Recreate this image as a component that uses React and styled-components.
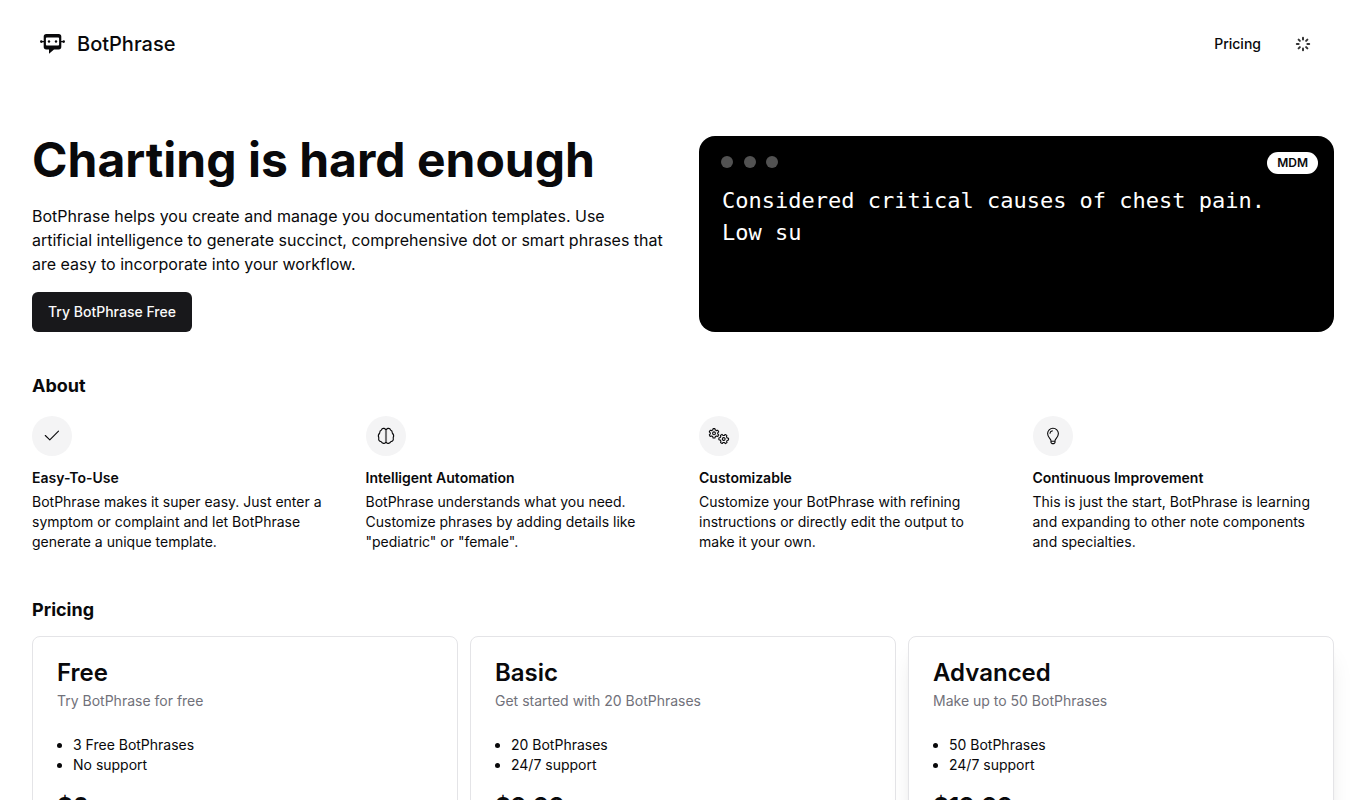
import React from 'react';
import styled, { createGlobalStyle, ThemeProvider } from 'styled-components';

const theme = {
  colors: {
    text: '#09090b',
    muted: '#71717a',
    border: '#e4e4e7',
    primary: '#18181b',
    onPrimary: '#fafafa',
    chip: '#f4f4f5',
    white: '#ffffff',
    black: '#000000',
  },
};

const GlobalStyle = createGlobalStyle`
  *,
  *::before,
  *::after {
    box-sizing: border-box;
  }

  body {
    margin: 0;
    background-color: #ffffff;
    color: #09090b;
    font-family: Inter, 'Liberation Sans', sans-serif;
    font-size: 16px;
    line-height: 24px;
  }

  h1, h2, h3, p, ul {
    margin: 0;
    padding: 0;
  }

  a {
    color: inherit;
    text-decoration: none;
  }
`;

const HeaderContainer = styled.header`
  display: flex;
  justify-content: space-between;
  align-items: center;
  padding: 24px 40px;
`;

const Brand = styled.a`
  display: flex;
  align-items: center;
  gap: 12px;
  font-size: 20px;
  font-weight: 500;
  line-height: 28px;
`;

const Nav = styled.nav`
  display: flex;
  align-items: center;
  gap: 18px;
`;

const NavLink = styled.a`
  padding: 10px 16px;
  font-size: 14px;
  font-weight: 500;
  line-height: 20px;
`;

const Spinner = styled.span`
  display: flex;
  padding-right: 15px;
`;

const Main = styled.main`
  padding: 48px 32px;
`;

const Hero = styled.section`
  display: grid;
  grid-template-columns: repeat(2, minmax(0, 1fr));
  gap: 32px;
  margin-bottom: 40px;
`;

const HeroText = styled.div`
  display: flex;
  flex-direction: column;
  align-items: flex-start;
`;

const HeroTitle = styled.h1`
  margin-bottom: 20px;
  font-size: 48px;
  font-weight: 700;
  line-height: 48px;
`;

const HeroCopy = styled.p`
  margin-bottom: 16px;
`;

const PrimaryButton = styled.button`
  height: 40px;
  padding: 0 16px;
  border: 0;
  border-radius: 6px;
  background-color: ${props => props.theme.colors.primary};
  color: ${props => props.theme.colors.onPrimary};
  font-family: inherit;
  font-size: 14px;
  font-weight: 500;
  line-height: 20px;
  cursor: pointer;
`;

const Terminal = styled.div`
  padding: 16px 16px 24px 22px;
  border-radius: 16px;
  background-color: ${props => props.theme.colors.black};
  color: ${props => props.theme.colors.white};
`;

const TerminalBar = styled.div`
  display: flex;
  justify-content: space-between;
  align-items: flex-start;
  margin-bottom: 11px;
`;

const WindowDots = styled.svg`
  margin-top: 4px;
`;

const Badge = styled.span`
  padding: 3px 10px;
  border-radius: 999px;
  background-color: ${props => props.theme.colors.white};
  color: ${props => props.theme.colors.text};
  font-size: 12px;
  font-weight: 600;
  line-height: 16px;
`;

const TerminalText = styled.p`
  padding: 0 24px 0 1px;
  font-family: Consolas, 'DejaVu Sans Mono', monospace;
  font-size: 22px;
  line-height: 32px;
`;

const SectionTitle = styled.h2`
  font-size: 18px;
  font-weight: 700;
  line-height: 28px;
`;

const FeatureGrid = styled.div`
  display: grid;
  grid-template-columns: repeat(4, minmax(0, 1fr));
  gap: 32px;
  margin: 16px 0 44px;
`;

const FeatureIcon = styled.div`
  display: flex;
  align-items: center;
  justify-content: center;
  width: 40px;
  height: 40px;
  margin-bottom: 12px;
  border-radius: 50%;
  background-color: ${props => props.theme.colors.chip};
`;

const FeatureTitle = styled.h3`
  margin-bottom: 4px;
  font-size: 14px;
  font-weight: 600;
  line-height: 20px;
`;

const FeatureCopy = styled.p`
  padding-right: 8px;
  font-size: 14px;
  line-height: 20px;
`;

const PlanGrid = styled.div`
  display: grid;
  grid-template-columns: repeat(3, minmax(0, 1fr));
  gap: 12px;
  margin-top: 12px;
`;

const PlanCard = styled.article`
  padding: 24px;
  border: 1px solid ${props => props.theme.colors.border};
  border-radius: 8px;
  background-color: ${props => props.theme.colors.white};
  box-shadow: ${props =>
    props.$raised ? '0 20px 25px -5px rgba(0, 0, 0, 0.1), 0 8px 10px -6px rgba(0, 0, 0, 0.1)' : 'none'};
`;

const PlanName = styled.h3`
  margin-bottom: 6px;
  font-size: 24px;
  font-weight: 600;
  line-height: 24px;
`;

const PlanSummary = styled.p`
  margin-bottom: 24px;
  color: ${props => props.theme.colors.muted};
  font-size: 14px;
  line-height: 20px;
`;

const PlanPerks = styled.ul`
  margin-bottom: 16px;
  padding-left: 16px;
  font-size: 14px;
  line-height: 20px;
`;

const PlanPrice = styled.p`
  margin-bottom: 24px;
  font-size: 24px;
  font-weight: 700;
  line-height: 32px;
`;

const LineIcon = styled.svg.attrs({
  width: 24,
  height: 24,
  viewBox: '0 0 24 24',
  'aria-hidden': true,
})`
  fill: none;
  stroke: currentColor;
  stroke-width: 1.1;
  stroke-linecap: round;
  stroke-linejoin: round;
`;

const CheckIcon = () => (
  <LineIcon>
    <path d="M5.300 11.500L9.800 15.900L18.500 7.200" />
  </LineIcon>
);

const BrainIcon = () => (
  <LineIcon>
    <path d="M11.500 5.500c-.7-1.800-3.500-1.300-4 .4-1.100.4-1.900 1.600-1.800 3.100-1.300 1.200-1.700 3.100-.9 4.800-.4 1.700.5 3.500 2.500 4 .7 2 3.700 2 4.200.7" />
    <path d="M12.500 5.500c.7-1.800 3.500-1.300 4 .4 1.100.4 1.900 1.600 1.800 3.100 1.300 1.200 1.700 3.100.9 4.800.4 1.700-.5 3.500-2.500 4-.7 2-3.700 2-4.200.7" />
    <path d="M11.500 5.500v13M12.500 5.500v13" strokeOpacity="0.550" />
  </LineIcon>
);

const gearPath =
  'M-.9-4.700h1.800l.4 1.400 1.100.6 1.400-.4.9 1.600-1 1v1l1 1-.9 1.600-1.400-.4-1.100.6-.4 1.400h-1.800l-.4-1.400-1.100-.6-1.400.4-.9-1.600 1-1v-1l-1-1 .9-1.600 1.400.4 1.100-.6z';

const GearsIcon = () => (
  <LineIcon>
    <g transform="translate(7 9.300)">
      <path d={gearPath} />
      <circle r="1.400" />
    </g>
    <g transform="translate(16.700 15) rotate(30)">
      <path d={gearPath} />
      <circle r="1.400" />
    </g>
  </LineIcon>
);

const BulbIcon = () => (
  <LineIcon>
    <path d="M10 16.800c0-2-3.400-3.400-3.400-7.200a5.400 5.400 0 0 1 10.800 0c0 3.800-3.400 5.200-3.400 7.200" />
    <path d="M9 9.300c.1-1.300 1-2.200 2.300-2.400M10 17.300h4v1.300l-1 1h-2l-1-1z" />
  </LineIcon>
);

const features = [
  {
    icon: <CheckIcon />,
    title: 'Easy-To-Use',
    copy: 'BotPhrase makes it super easy. Just enter a symptom or complaint and let BotPhrase generate a unique template.',
  },
  {
    icon: <BrainIcon />,
    title: 'Intelligent Automation',
    copy: 'BotPhrase understands what you need. Customize phrases by adding details like "pediatric" or "female".',
  },
  {
    icon: <GearsIcon />,
    title: 'Customizable',
    copy: 'Customize your BotPhrase with refining instructions or directly edit the output to make it your own.',
  },
  {
    icon: <BulbIcon />,
    title: 'Continuous Improvement',
    copy: 'This is just the start, BotPhrase is learning and expanding to other note components and specialties.',
  },
];

const plans = [
  {
    name: 'Free',
    summary: 'Try BotPhrase for free',
    perks: ['3 Free BotPhrases', 'No support'],
    price: '$0',
  },
  {
    name: 'Basic',
    summary: 'Get started with 20 BotPhrases',
    perks: ['20 BotPhrases', '24/7 support'],
    price: '$9.99',
  },
  {
    name: 'Advanced',
    summary: 'Make up to 50 BotPhrases',
    perks: ['50 BotPhrases', '24/7 support'],
    price: '$19.99',
    raised: true,
  },
];

const BotLogo = () => (
  <svg width="25" height="20" viewBox="0 0 25 20" fill="currentColor" aria-hidden="true">
    <path
      fillRule="evenodd"
      d="M6.300 0h12.400a2.600 2.600 0 0 1 2.600 2.600v10.200a2.600 2.600 0 0 1-2.600 2.600h-4.700l-5 4.400v-4.400H6.300a2.600 2.600 0 0 1-2.600-2.600V2.600A2.600 2.600 0 0 1 6.300 0zM6.800 3.600a.9.9 0 0 0-.9.9v6a.9.9 0 0 0 .9.9h11.400a.9.9 0 0 0 .9-.9v-6a.9.9 0 0 0-.9-.9z"
    />
    <circle cx="9" cy="7.500" r="1.200" />
    <circle cx="16" cy="7.500" r="1.200" />
    <path d="M1 7h3v1.200H1zM21 7h3v1.200h-3z" />
    <circle cx="1.300" cy="7.600" r="1.300" />
    <circle cx="23.700" cy="7.600" r="1.300" />
  </svg>
);

const SpinnerIcon = () => (
  <svg width="16" height="16" viewBox="-8 -8 16 16" aria-hidden="true">
    {[0, 45, 90, 135, 180, 225, 270, 315].map(angle => (
      <path
        key={angle}
        d="M0-6.200v1.800"
        stroke="#333333"
        strokeWidth="2"
        strokeLinecap="round"
        transform={`rotate(${angle})`}
      />
    ))}
  </svg>
);

const Header = () => (
  <HeaderContainer>
    <Brand href="#">
      <BotLogo />
      BotPhrase
    </Brand>
    <Nav>
      <NavLink href="#pricing">Pricing</NavLink>
      <Spinner role="status" aria-label="Loading">
        <SpinnerIcon />
      </Spinner>
    </Nav>
  </HeaderContainer>
);

const Feature = ({ icon, title, copy }) => (
  <div>
    <FeatureIcon>{icon}</FeatureIcon>
    <FeatureTitle>{title}</FeatureTitle>
    <FeatureCopy>{copy}</FeatureCopy>
  </div>
);

const Plan = ({ name, summary, perks, price, raised }) => (
  <PlanCard $raised={raised}>
    <PlanName>{name}</PlanName>
    <PlanSummary>{summary}</PlanSummary>
    <PlanPerks>
      {perks.map(perk => (
        <li key={perk}>{perk}</li>
      ))}
    </PlanPerks>
    <PlanPrice>{price}</PlanPrice>
  </PlanCard>
);

const App = () => (
  <ThemeProvider theme={theme}>
    <GlobalStyle />
    <Header />
    <Main>
      <Hero>
        <HeroText>
          <HeroTitle>Charting is hard enough</HeroTitle>
          <HeroCopy>
            BotPhrase helps you create and manage you documentation templates. Use artificial
            intelligence to generate succinct, comprehensive dot or smart phrases that are easy to
            incorporate into your workflow.
          </HeroCopy>
          <PrimaryButton type="button">Try BotPhrase Free</PrimaryButton>
        </HeroText>
        <Terminal>
          <TerminalBar>
            <WindowDots width="58" height="12" viewBox="0 0 58 12" fill="#525252" aria-hidden="true">
              <circle cx="6" cy="6" r="6" />
              <circle cx="29" cy="6" r="6" />
              <circle cx="51" cy="6" r="6" />
            </WindowDots>
            <Badge>MDM</Badge>
          </TerminalBar>
          <TerminalText>Considered critical causes of chest pain. Low su</TerminalText>
        </Terminal>
      </Hero>
      <section>
        <SectionTitle>About</SectionTitle>
        <FeatureGrid>
          {features.map(feature => (
            <Feature key={feature.title} {...feature} />
          ))}
        </FeatureGrid>
      </section>
      <section id="pricing">
        <SectionTitle>Pricing</SectionTitle>
        <PlanGrid>
          {plans.map(plan => (
            <Plan key={plan.name} {...plan} />
          ))}
        </PlanGrid>
      </section>
    </Main>
  </ThemeProvider>
);

export default App;
